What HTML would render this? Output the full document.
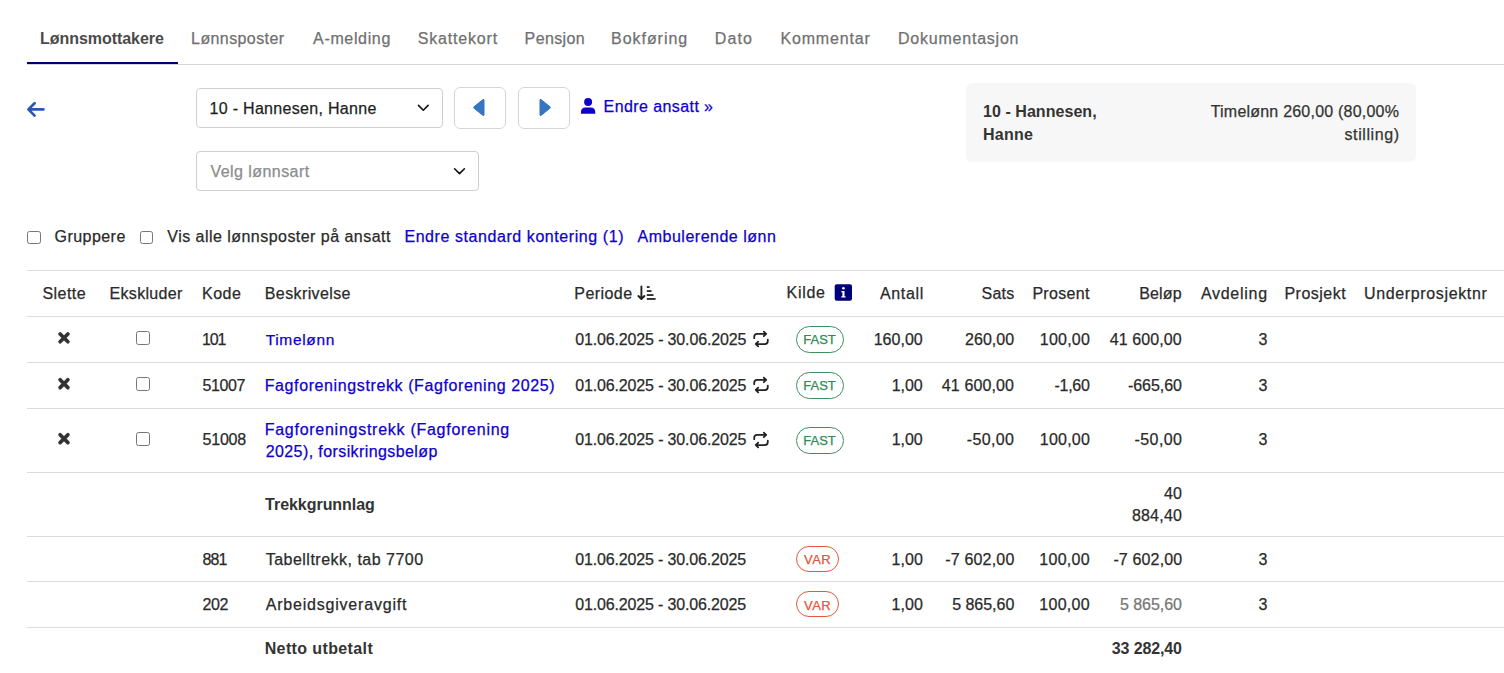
<!DOCTYPE html>
<html><head><meta charset="utf-8">
<style>
html,body{margin:0;padding:0;background:#fff;width:1504px;height:673px;overflow:hidden;position:relative;font-family:"Liberation Sans",sans-serif;}
.t{position:absolute;white-space:nowrap;line-height:20px;-webkit-text-stroke:0.25px currentColor;}
.b{-webkit-text-stroke:0;}
.a{position:absolute;}
.hl{position:absolute;left:27px;width:1477px;height:1px;background:#dcdcdc;}
.box{position:absolute;box-sizing:border-box;border:1px solid #cfcfcf;border-radius:5px;background:#fff;}
.cb{position:absolute;box-sizing:border-box;width:13.5px;height:13.5px;border:1px solid #767676;border-radius:2.5px;background:#fff;}
.badge{position:absolute;box-sizing:border-box;border-radius:14px;}
</style></head><body>
<!-- tabs -->
<div class="a" style="left:27px;top:64px;width:1477px;height:1px;background:#d8d8d8"></div>
<div class="a" style="left:27px;top:62px;width:151px;height:2px;background:#000070"></div>

<!-- back arrow -->
<svg class="a" style="left:0;top:0" width="60" height="130" viewBox="0 0 60 130">
<path d="M43.4 109.4 H28.6 M34.6 103.2 L28.4 109.4 L34.6 115.6" fill="none" stroke="#2857b8" stroke-width="2.7" stroke-linecap="round" stroke-linejoin="round"/>
</svg>

<!-- select 1 -->
<div class="box" style="left:196px;top:88px;width:247px;height:40px;border-radius:4px"></div>
<svg class="a" style="left:400px;top:95px" width="40" height="25" viewBox="400 95 40 25">
<path d="M418.5 105.4 L423.3 110.2 L428.1 105.4" fill="none" stroke="#111" stroke-width="1.6" stroke-linecap="round" stroke-linejoin="round"/>
</svg>
<!-- select 2 -->
<div class="box" style="left:196px;top:151px;width:283px;height:40px;border-radius:4px"></div>
<svg class="a" style="left:440px;top:155px" width="40" height="30" viewBox="440 155 40 30">
<path d="M454.6 168.8 L459.5 173.6 L464.4 168.8" fill="none" stroke="#111" stroke-width="1.6" stroke-linecap="round" stroke-linejoin="round"/>
</svg>

<!-- nav buttons -->
<div class="box" style="left:454px;top:87px;width:51.5px;height:41.5px;border:1.5px solid #d6d6d6;border-radius:6px"></div>
<div class="box" style="left:518px;top:87px;width:51.5px;height:41.5px;border:1.5px solid #d6d6d6;border-radius:6px"></div>
<svg class="a" style="left:460px;top:90px" width="100" height="35" viewBox="460 90 100 35">
<path d="M484 100.3 Q484 98.8 482.8 99.7 L474.2 106.6 Q473.2 107.5 474.2 108.4 L482.8 115.3 Q484 116.2 484 114.7 Z" fill="#3575c2" stroke="#3575c2" stroke-width="1" stroke-linejoin="round"/>
<path d="M540 100.3 Q540 98.8 541.2 99.7 L549.8 106.6 Q550.8 107.5 549.8 108.4 L541.2 115.3 Q540 116.2 540 114.7 Z" fill="#3575c2" stroke="#3575c2" stroke-width="1" stroke-linejoin="round"/>
</svg>

<!-- person icon -->
<svg class="a" style="left:578px;top:95px" width="22" height="22" viewBox="578 95 22 22">
<circle cx="588.1" cy="102.1" r="4" fill="#0e00cc"/>
<path d="M581 113.7 L581 112.2 Q581 107.6 585.6 107.6 L590.6 107.6 Q595.2 107.6 595.2 112.2 L595.2 113.7 Z" fill="#0e00cc"/>
</svg>

<!-- info box -->
<div class="a" style="left:966px;top:83px;width:450px;height:78.5px;background:#f7f7f7;border-radius:6px"></div>

<!-- checkboxes row -->
<div class="cb" style="left:27px;top:230.5px;"></div>
<div class="cb" style="left:139.5px;top:230.5px;"></div>

<!-- table lines -->
<div class="hl" style="top:270px"></div>
<div class="hl" style="top:316px"></div>
<div class="hl" style="top:362px"></div>
<div class="hl" style="top:408px"></div>
<div class="hl" style="top:472px"></div>
<div class="hl" style="top:536px"></div>
<div class="hl" style="top:581px"></div>
<div class="hl" style="top:627px"></div>

<!-- header icons -->
<svg class="a" style="left:630px;top:280px" width="30" height="25" viewBox="630 280 30 25">
<path d="M641.4 286.4 V298.8 M638.4 296 L641.4 299 L644.4 296" fill="none" stroke="#222" stroke-width="1.9" stroke-linecap="round" stroke-linejoin="round"/>
<rect x="646.8" y="286.2" width="2.8" height="1.7" fill="#1a1a1a"/>
<rect x="646.8" y="290.2" width="4.7" height="1.7" fill="#1a1a1a"/>
<rect x="646.8" y="294.2" width="6.7" height="1.7" fill="#1a1a1a"/>
<rect x="646.8" y="298.1" width="8.8" height="1.7" fill="#1a1a1a"/>
</svg>
<svg class="a" style="left:834px;top:284px" width="19" height="18" viewBox="834 284 19 18">
<rect x="834.7" y="284.2" width="17.3" height="16.6" rx="2" fill="#00007a"/>
<circle cx="843.4" cy="288.2" r="1.3" fill="#fff"/>
<path d="M841.3 290.9 H844.5 V296.3 H845.6 V297.6 H841.3 V296.3 H842.4 V292.2 H841.3 Z" fill="#fff"/>
</svg>

<!-- row icons -->
<svg class="a" style="left:0;top:0" width="800" height="470" viewBox="0 0 800 470">
<g fill="none" stroke="#333" stroke-width="3.7" stroke-linecap="round">
<path d="M60.1 334 L67.9 341.8 M67.9 334 L60.1 341.8"/>
<path d="M60.1 379.8 L67.9 387.6 M67.9 379.8 L60.1 387.6"/>
<path d="M60.1 434.8 L67.9 442.6 M67.9 434.8 L60.1 442.6"/>
</g>
<g fill="none" stroke="#222" stroke-width="1.75" stroke-linecap="round" stroke-linejoin="round">
<path d="M754.2 338.2 V336.9 Q754.2 333.9 757.2 333.9 H766 M763.8 331.6 L766.2 333.9 L763.8 336.2"/>
<path d="M767.8 339.6 V341 Q767.8 344 764.8 344 H756 M758.2 341.7 L755.8 344 L758.2 346.3"/>
</g>
<g fill="none" stroke="#222" stroke-width="1.75" stroke-linecap="round" stroke-linejoin="round" transform="translate(0,46)">
<path d="M754.2 338.2 V336.9 Q754.2 333.9 757.2 333.9 H766 M763.8 331.6 L766.2 333.9 L763.8 336.2"/>
<path d="M767.8 339.6 V341 Q767.8 344 764.8 344 H756 M758.2 341.7 L755.8 344 L758.2 346.3"/>
</g>
<g fill="none" stroke="#222" stroke-width="1.75" stroke-linecap="round" stroke-linejoin="round" transform="translate(0,101)">
<path d="M754.2 338.2 V336.9 Q754.2 333.9 757.2 333.9 H766 M763.8 331.6 L766.2 333.9 L763.8 336.2"/>
<path d="M767.8 339.6 V341 Q767.8 344 764.8 344 H756 M758.2 341.7 L755.8 344 L758.2 346.3"/>
</g>
</svg>
<div class="cb" style="left:136px;top:331px;"></div>
<div class="cb" style="left:136px;top:377px;"></div>
<div class="cb" style="left:136px;top:432px;"></div>

<!-- badges -->
<div class="badge" style="left:796px;top:326px;width:48px;height:26.6px;border:1.2px solid #3d8f5e"></div>
<div class="badge" style="left:796px;top:372px;width:48px;height:26.6px;border:1.2px solid #3d8f5e"></div>
<div class="badge" style="left:796px;top:427px;width:48px;height:26.6px;border:1.2px solid #3d8f5e"></div>
<div class="badge" style="left:796px;top:546px;width:43px;height:26px;border:1.2px solid #e2583e"></div>
<div class="badge" style="left:796px;top:591.2px;width:43px;height:26px;border:1.2px solid #e2583e"></div>

<span class="t b" style="left:40.00px;top:29.00px;font-size:16px;font-weight:700;color:#4a4a4a;letter-spacing:-0.044px;">Lønnsmottakere</span>
<span class="t" style="left:191.10px;top:29.00px;font-size:16px;font-weight:400;color:#707070;letter-spacing:0.399px;">Lønnsposter</span>
<span class="t" style="left:313.10px;top:29.00px;font-size:16px;font-weight:400;color:#707070;letter-spacing:0.646px;">A-melding</span>
<span class="t" style="left:417.80px;top:29.00px;font-size:16px;font-weight:400;color:#707070;letter-spacing:0.813px;">Skattekort</span>
<span class="t" style="left:524.60px;top:29.00px;font-size:16px;font-weight:400;color:#707070;letter-spacing:0.363px;">Pensjon</span>
<span class="t" style="left:611.00px;top:29.00px;font-size:16px;font-weight:400;color:#707070;letter-spacing:0.966px;">Bokføring</span>
<span class="t" style="left:714.70px;top:29.00px;font-size:16px;font-weight:400;color:#707070;letter-spacing:1.134px;">Dato</span>
<span class="t" style="left:780.40px;top:29.00px;font-size:16px;font-weight:400;color:#707070;letter-spacing:0.854px;">Kommentar</span>
<span class="t" style="left:898.00px;top:29.00px;font-size:16px;font-weight:400;color:#707070;letter-spacing:0.777px;">Dokumentasjon</span>
<span class="t" style="left:209.50px;top:99.40px;font-size:16px;font-weight:400;color:#1e1e1e;letter-spacing:0.305px;">10 - Hannesen, Hanne</span>
<span class="t" style="left:210.50px;top:162.40px;font-size:16px;font-weight:400;color:#8c8c8c;letter-spacing:0.439px;">Velg lønnsart</span>
<span class="t" style="left:603.60px;top:96.60px;font-size:16px;font-weight:400;color:#0e00cc;letter-spacing:0.410px;">Endre ansatt »</span>
<span class="t b" style="left:983.00px;top:102.40px;font-size:16px;font-weight:700;color:#333;letter-spacing:0.055px;">10 - Hannesen,</span>
<span class="t b" style="left:983.00px;top:125.20px;font-size:16px;font-weight:700;color:#333;letter-spacing:0.250px;">Hanne</span>
<span class="t" style="left:1210.70px;top:101.80px;font-size:16px;font-weight:400;color:#333;letter-spacing:0.214px;">Timelønn 260,00 (80,00%</span>
<span class="t" style="left:1344.50px;top:124.60px;font-size:16px;font-weight:400;color:#333;letter-spacing:0.592px;">stilling)</span>
<span class="t" style="left:54.60px;top:227.20px;font-size:16px;font-weight:400;color:#2a2a2a;letter-spacing:0.444px;">Gruppere</span>
<span class="t" style="left:167.30px;top:227.20px;font-size:16px;font-weight:400;color:#2a2a2a;letter-spacing:0.464px;">Vis alle lønnsposter på ansatt</span>
<span class="t" style="left:404.40px;top:227.20px;font-size:16px;font-weight:400;color:#0e00cc;letter-spacing:0.572px;">Endre standard kontering (1)</span>
<span class="t" style="left:637.50px;top:227.20px;font-size:16px;font-weight:400;color:#0e00cc;letter-spacing:0.510px;">Ambulerende lønn</span>
<span class="t" style="left:42.50px;top:284.00px;font-size:16px;font-weight:400;color:#2a2a2a;letter-spacing:0.437px;">Slette</span>
<span class="t" style="left:109.60px;top:284.00px;font-size:16px;font-weight:400;color:#2a2a2a;letter-spacing:0.297px;">Ekskluder</span>
<span class="t" style="left:201.90px;top:284.00px;font-size:16px;font-weight:400;color:#2a2a2a;letter-spacing:0.577px;">Kode</span>
<span class="t" style="left:264.80px;top:284.00px;font-size:16px;font-weight:400;color:#2a2a2a;letter-spacing:0.389px;">Beskrivelse</span>
<span class="t" style="left:574.30px;top:284.00px;font-size:16px;font-weight:400;color:#2a2a2a;letter-spacing:0.442px;">Periode</span>
<span class="t" style="left:879.90px;top:284.00px;font-size:16px;font-weight:400;color:#2a2a2a;letter-spacing:0.686px;">Antall</span>
<span class="t" style="left:981.60px;top:284.00px;font-size:16px;font-weight:400;color:#2a2a2a;letter-spacing:0.195px;">Sats</span>
<span class="t" style="left:1032.40px;top:284.00px;font-size:16px;font-weight:400;color:#2a2a2a;letter-spacing:0.301px;">Prosent</span>
<span class="t" style="left:1139.30px;top:284.00px;font-size:16px;font-weight:400;color:#2a2a2a;letter-spacing:0.125px;">Beløp</span>
<span class="t" style="left:1200.90px;top:284.00px;font-size:16px;font-weight:400;color:#2a2a2a;letter-spacing:0.730px;">Avdeling</span>
<span class="t" style="left:1284.40px;top:284.00px;font-size:16px;font-weight:400;color:#2a2a2a;letter-spacing:0.493px;">Prosjekt</span>
<span class="t" style="left:1364.00px;top:284.00px;font-size:16px;font-weight:400;color:#2a2a2a;letter-spacing:0.643px;">Underprosjektnr</span>
<span class="t" style="left:786.50px;top:282.80px;font-size:16px;font-weight:400;color:#2a2a2a;letter-spacing:0.705px;">Kilde</span>
<span class="t" style="left:201.90px;top:329.50px;font-size:16px;font-weight:400;color:#2a2a2a;letter-spacing:-1.048px;">101</span>
<span class="t" style="left:265.70px;top:330.30px;font-size:15.5px;font-weight:400;color:#0e00cc;letter-spacing:0.671px;">Timelønn</span>
<span class="t" style="left:575.20px;top:329.50px;font-size:16px;font-weight:400;color:#2a2a2a;letter-spacing:-0.144px;">01.06.2025 - 30.06.2025</span>
<span class="t" style="left:873.70px;top:329.50px;font-size:16px;font-weight:400;color:#2a2a2a;letter-spacing:0.012px;">160,00</span>
<span class="t" style="left:965.10px;top:329.50px;font-size:16px;font-weight:400;color:#2a2a2a;letter-spacing:0.012px;">260,00</span>
<span class="t" style="left:1039.80px;top:329.50px;font-size:16px;font-weight:400;color:#2a2a2a;letter-spacing:0.212px;">100,00</span>
<span class="t" style="left:1109.80px;top:329.50px;font-size:16px;font-weight:400;color:#2a2a2a;letter-spacing:0.077px;">41 600,00</span>
<span class="t" style="left:1258.50px;top:329.50px;font-size:16px;font-weight:400;color:#2a2a2a;letter-spacing:0.000px;">3</span>
<span class="t" style="left:202.60px;top:376.00px;font-size:16px;font-weight:400;color:#2a2a2a;letter-spacing:-0.423px;">51007</span>
<span class="t" style="left:264.70px;top:376.00px;font-size:16px;font-weight:400;color:#0e00cc;letter-spacing:0.610px;">Fagforeningstrekk (Fagforening 2025)</span>
<span class="t" style="left:575.20px;top:376.00px;font-size:16px;font-weight:400;color:#2a2a2a;letter-spacing:-0.144px;">01.06.2025 - 30.06.2025</span>
<span class="t" style="left:891.80px;top:376.00px;font-size:16px;font-weight:400;color:#2a2a2a;letter-spacing:-0.081px;">1,00</span>
<span class="t" style="left:941.80px;top:376.00px;font-size:16px;font-weight:400;color:#2a2a2a;letter-spacing:0.115px;">41 600,00</span>
<span class="t" style="left:1054.40px;top:376.00px;font-size:16px;font-weight:400;color:#2a2a2a;letter-spacing:-0.243px;">-1,60</span>
<span class="t" style="left:1127.90px;top:376.00px;font-size:16px;font-weight:400;color:#2a2a2a;letter-spacing:-0.045px;">-665,60</span>
<span class="t" style="left:1258.50px;top:376.00px;font-size:16px;font-weight:400;color:#2a2a2a;letter-spacing:0.000px;">3</span>
<span class="t" style="left:202.60px;top:430.30px;font-size:16px;font-weight:400;color:#2a2a2a;letter-spacing:-0.223px;">51008</span>
<span class="t" style="left:264.70px;top:420.20px;font-size:16px;font-weight:400;color:#0e00cc;letter-spacing:0.734px;">Fagforeningstrekk (Fagforening</span>
<span class="t" style="left:265.70px;top:441.80px;font-size:16px;font-weight:400;color:#0e00cc;letter-spacing:0.407px;">2025), forsikringsbeløp</span>
<span class="t" style="left:575.20px;top:430.30px;font-size:16px;font-weight:400;color:#2a2a2a;letter-spacing:-0.144px;">01.06.2025 - 30.06.2025</span>
<span class="t" style="left:891.80px;top:430.30px;font-size:16px;font-weight:400;color:#2a2a2a;letter-spacing:-0.081px;">1,00</span>
<span class="t" style="left:966.70px;top:430.30px;font-size:16px;font-weight:400;color:#2a2a2a;letter-spacing:0.366px;">-50,00</span>
<span class="t" style="left:1039.80px;top:430.30px;font-size:16px;font-weight:400;color:#2a2a2a;letter-spacing:0.232px;">100,00</span>
<span class="t" style="left:1134.60px;top:430.30px;font-size:16px;font-weight:400;color:#2a2a2a;letter-spacing:0.386px;">-50,00</span>
<span class="t" style="left:1258.50px;top:430.30px;font-size:16px;font-weight:400;color:#2a2a2a;letter-spacing:0.000px;">3</span>
<span class="t b" style="left:265.10px;top:494.90px;font-size:16px;font-weight:700;color:#333;letter-spacing:-0.040px;">Trekkgrunnlag</span>
<span class="t" style="left:1164.00px;top:483.90px;font-size:16px;font-weight:400;color:#2a2a2a;letter-spacing:0.102px;">40</span>
<span class="t" style="left:1131.90px;top:505.90px;font-size:16px;font-weight:400;color:#2a2a2a;letter-spacing:0.212px;">884,40</span>
<span class="t" style="left:202.50px;top:549.60px;font-size:16px;font-weight:400;color:#2a2a2a;letter-spacing:-0.848px;">881</span>
<span class="t" style="left:265.70px;top:549.60px;font-size:16px;font-weight:400;color:#2a2a2a;letter-spacing:0.487px;">Tabelltrekk, tab 7700</span>
<span class="t" style="left:575.20px;top:549.60px;font-size:16px;font-weight:400;color:#2a2a2a;letter-spacing:-0.153px;">01.06.2025 - 30.06.2025</span>
<span class="t" style="left:891.40px;top:549.60px;font-size:16px;font-weight:400;color:#2a2a2a;letter-spacing:0.119px;">1,00</span>
<span class="t" style="left:945.20px;top:549.60px;font-size:16px;font-weight:400;color:#2a2a2a;letter-spacing:0.186px;">-7 602,00</span>
<span class="t" style="left:1039.30px;top:549.60px;font-size:16px;font-weight:400;color:#2a2a2a;letter-spacing:0.292px;">100,00</span>
<span class="t" style="left:1113.40px;top:549.60px;font-size:16px;font-weight:400;color:#2a2a2a;letter-spacing:0.149px;">-7 602,00</span>
<span class="t" style="left:1258.50px;top:549.60px;font-size:16px;font-weight:400;color:#2a2a2a;letter-spacing:0.000px;">3</span>
<span class="t" style="left:202.50px;top:595.30px;font-size:16px;font-weight:400;color:#2a2a2a;letter-spacing:-0.348px;">202</span>
<span class="t" style="left:265.70px;top:595.30px;font-size:16px;font-weight:400;color:#2a2a2a;letter-spacing:0.798px;">Arbeidsgiveravgift</span>
<span class="t" style="left:575.20px;top:595.30px;font-size:16px;font-weight:400;color:#2a2a2a;letter-spacing:-0.153px;">01.06.2025 - 30.06.2025</span>
<span class="t" style="left:891.40px;top:595.30px;font-size:16px;font-weight:400;color:#2a2a2a;letter-spacing:0.119px;">1,00</span>
<span class="t" style="left:952.20px;top:595.30px;font-size:16px;font-weight:400;color:#2a2a2a;letter-spacing:-0.026px;">5 865,60</span>
<span class="t" style="left:1039.30px;top:595.30px;font-size:16px;font-weight:400;color:#2a2a2a;letter-spacing:0.292px;">100,00</span>
<span class="t" style="left:1120.00px;top:595.30px;font-size:16px;font-weight:400;color:#777;letter-spacing:-0.055px;">5 865,60</span>
<span class="t" style="left:1258.50px;top:595.30px;font-size:16px;font-weight:400;color:#2a2a2a;letter-spacing:0.000px;">3</span>
<span class="t b" style="left:264.70px;top:639.20px;font-size:16px;font-weight:700;color:#333;letter-spacing:0.379px;">Netto utbetalt</span>
<span class="t b" style="left:1111.80px;top:639.20px;font-size:16px;font-weight:700;color:#333;letter-spacing:-0.135px;">33 282,40</span>
<span class="t" style="left:803.30px;top:329.70px;font-size:13px;font-weight:400;color:#2f8a57;letter-spacing:-0.022px;">FAST</span>
<span class="t" style="left:803.30px;top:375.80px;font-size:13px;font-weight:400;color:#2f8a57;letter-spacing:-0.022px;">FAST</span>
<span class="t" style="left:803.30px;top:430.60px;font-size:13px;font-weight:400;color:#2f8a57;letter-spacing:-0.022px;">FAST</span>
<span class="t" style="left:804.10px;top:549.90px;font-size:13px;font-weight:400;color:#e4533c;letter-spacing:0.362px;">VAR</span>
<span class="t" style="left:804.10px;top:595.60px;font-size:13px;font-weight:400;color:#e4533c;letter-spacing:0.362px;">VAR</span>
</body></html>
